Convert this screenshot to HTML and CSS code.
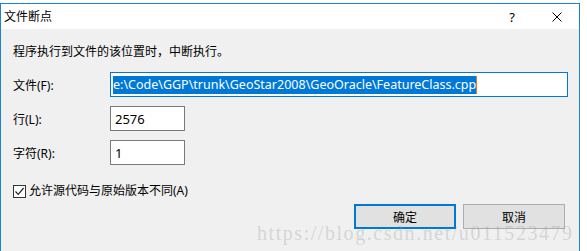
FILE: index.html
```html
<!DOCTYPE html>
<html lang="zh-CN">
<head>
    <meta charset="UTF-8">
    <title>文件断点</title>
    <link rel="stylesheet" href="styles.css">
</head>
<body>
    <div class="window">
        <div class="titlebar">
            <span class="title">文件断点</span>
            <span class="help">?</span>
            <span class="close">
                <svg width="10" height="10" viewBox="0 0 10 10"><path d="M0.5 0.5 L9.5 9.5 M9.5 0.5 L0.5 9.5" stroke="#000" stroke-width="1" fill="none"/></svg>
            </span>
        </div>

        <div class="content">
            <p class="intro">程序执行到文件的该位置时，中断执行。</p>

            <div class="rows">
                <div class="row">
                    <span class="label">文件(F):</span>
                    <div class="field wide focus"><span class="sel">e:\Code\GGP\trunk\GeoStar2008\GeoOracle\FeatureClass.cpp</span><span class="caret"></span></div>
                </div>
                <div class="row">
                    <span class="label">行(L):</span>
                    <div class="field small">2576</div>
                </div>
                <div class="row">
                    <span class="label">字符(R):</span>
                    <div class="field small">1</div>
                </div>
            </div>

            <div class="check">
                <span class="box">
                    <svg width="11" height="11" viewBox="0 0 11 11"><path d="M1.5 5.5 L4.2 8.3 L9.6 2" stroke="#222" stroke-width="1.2" fill="none"/></svg>
                </span>
                <span>允许源代码与原始版本不同(A)</span>
            </div>

            <div class="buttons">
                <button class="btn default">确定</button>
                <button class="btn">取消</button>
            </div>
        </div>

        <div class="watermark">https://blog.csdn.net/u011523479</div>
    </div>
</body>
</html>
```

FILE: styles.css
```css
body {
    margin: 0;
    background-color: #fff;
    font-family: "Noto Sans", "Noto Sans CJK SC", sans-serif;
    font-size: 12px;
    color: #000;
    overflow: hidden;
}
.window {
    position: relative;
    margin-top: 3px;
    width: 578px;
    height: 248px;
    border: 1px solid #1883d7;
    border-bottom: none;
    background-color: #f0f0f0;
}
.titlebar {
    display: flex;
    align-items: center;
    height: 25px;
    background-color: #fff;
}
.title {
    flex: 1;
    padding-left: 3px;
    line-height: 16px;
}
.help {
    width: 44px;
    text-align: center;
    font-size: 13px;
}
.close {
    width: 45px;
    display: flex;
    justify-content: center;
    align-items: center;
}
.content {
    padding: 15px 11px 0 12px;
}
.intro {
    margin: 0;
    line-height: 16px;
}
.rows {
    margin-top: 12px;
    display: flex;
    flex-direction: column;
    gap: 9px;
}
.row {
    display: flex;
    align-items: center;
}
.label {
    width: 97px;
}
.field {
    box-sizing: border-box;
    height: 25px;
    border: 1px solid #7a7a7a;
    background-color: #fff;
    padding: 0 2px;
    display: flex;
    align-items: center;
    font-size: 13px;
}
.wide {
    width: 458px;
    font-size: 12.5px;
}
.small {
    width: 75px;
    padding-left: 4px;
}
.focus {
    border-color: #0078d7;
}
.sel {
    background-color: #0078d7;
    color: #fff;
    line-height: 18px;
}
.caret {
    width: 1px;
    height: 18px;
    background-color: #e07a2a;
}
.check {
    margin-top: 18px;
    display: flex;
    align-items: center;
    gap: 3px;
    line-height: 16px;
}
.box {
    box-sizing: border-box;
    width: 13px;
    height: 13px;
    border: 1px solid #333;
    background-color: #fff;
    display: flex;
    align-items: center;
    justify-content: center;
}
.buttons {
    margin-top: 5px;
    margin-right: 3px;
    display: flex;
    justify-content: flex-end;
    gap: 7px;
}
.btn {
    box-sizing: border-box;
    width: 102px;
    height: 25px;
    background-color: #e1e1e1;
    border: 1px solid #adadad;
    font-family: inherit;
    font-size: 12px;
    color: #000;
    padding: 0;
}
.btn.default {
    border: 2px solid #0078d7;
}
.watermark {
    position: absolute;
    left: 256px;
    top: 218px;
    font-family: "Liberation Serif", serif;
    font-size: 20px;
    letter-spacing: 1.55px;
    color: rgba(160, 160, 160, 0.35);
    white-space: nowrap;
    pointer-events: none;
}
```
